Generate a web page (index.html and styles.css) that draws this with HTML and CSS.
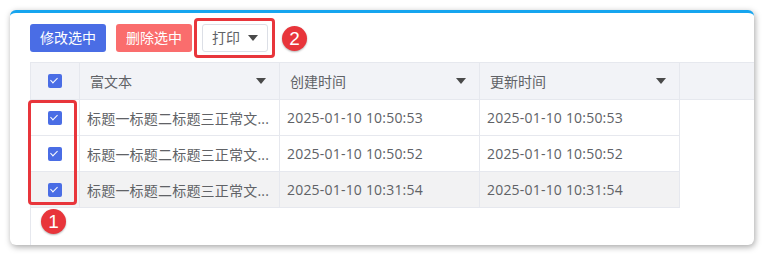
FILE: index.html
```html
<!DOCTYPE html>
<html lang="zh-CN">
<head>
    <meta charset="UTF-8">
    <title>打印</title>
    <link rel="stylesheet" href="styles.css">
</head>
<body>
    <div class="card">
        <div class="toolbar">
            <button class="btn btn-primary">修改选中</button>
            <button class="btn btn-danger">删除选中</button>
            <span class="print-wrap">
                <button class="btn btn-plain">打印 <i class="caret"></i></button>
                <span class="mark mark-print"></span>
                <span class="badge badge-2">2</span>
            </span>
        </div>
        <div class="table-wrap">
            <div class="thead">
                <div class="cell cell-check"><span class="check"></span></div>
                <div class="cell">富文本<i class="caret"></i></div>
                <div class="cell">创建时间<i class="caret"></i></div>
                <div class="cell">更新时间<i class="caret"></i></div>
                <div class="cell gutter"></div>
            </div>
            <div class="row">
                <div class="cell cell-check"><span class="check"></span></div>
                <div class="cell">标题一标题二标题三正常文...</div>
                <div class="cell">2025-01-10 10:50:53</div>
                <div class="cell">2025-01-10 10:50:53</div>
            </div>
            <div class="row">
                <div class="cell cell-check"><span class="check"></span></div>
                <div class="cell">标题一标题二标题三正常文...</div>
                <div class="cell">2025-01-10 10:50:52</div>
                <div class="cell">2025-01-10 10:50:52</div>
            </div>
            <div class="row hover">
                <div class="cell cell-check"><span class="check"></span></div>
                <div class="cell">标题一标题二标题三正常文...</div>
                <div class="cell">2025-01-10 10:31:54</div>
                <div class="cell">2025-01-10 10:31:54</div>
            </div>
            <span class="mark mark-check"></span>
            <span class="badge badge-1">1</span>
        </div>
    </div>
</body>
</html>
```

FILE: styles.css
```css
body {
    margin: 0;
    background: #fff;
    font-family: "Open Sans", "Noto Sans CJK SC", sans-serif;
    color: #606266;
}
.card {
    margin: 10px;
    height: 235px;
    box-sizing: border-box;
    background: #fff;
    border-top: 3px solid #16a5ef;
    border-radius: 6px;
    box-shadow: 1px 2px 6px rgba(0, 0, 0, 0.35);
    overflow: hidden;
    display: flex;
    flex-direction: column;
}
.toolbar {
    display: flex;
    gap: 10px;
    padding: 11px 20px 10px;
}
.btn {
    height: 28px;
    padding: 0 9px;
    border: 1px solid transparent;
    border-radius: 3px;
    font-family: inherit;
    font-size: 14px;
    line-height: 26px;
    color: #fff;
}
.btn-primary {
    background: #4a6de5;
}
.btn-danger {
    background: #fa6d6d;
}
.btn-plain {
    background: #fff;
    border-color: #dcdfe6;
    color: #606266;
    display: flex;
    align-items: center;
    gap: 8px;
}
.caret {
    display: inline-block;
    width: 0;
    height: 0;
    border-left: 5px solid transparent;
    border-right: 5px solid transparent;
    border-top: 6px solid #4a4a4a;
}
.print-wrap {
    position: relative;
}
.mark {
    position: absolute;
    border: 3px solid #e8353b;
    border-radius: 4px;
}
.mark-print {
    top: -6px;
    bottom: -6px;
    left: -8px;
    right: -7px;
}
.badge {
    position: absolute;
    width: 25px;
    height: 25px;
    border-radius: 50%;
    background: #e8353b;
    color: #fff;
    font-family: "Liberation Sans", sans-serif;
    font-size: 19px;
    line-height: 25px;
    text-align: center;
    box-shadow: 0 1px 2px rgba(0, 0, 0, 0.3);
}
.badge-2 {
    top: 2px;
    left: 80px;
}
.table-wrap {
    position: relative;
    flex: 1;
    margin-left: 20px;
    border-left: 1px solid #e6e8ee;
    font-size: 14px;
}
.thead, .row {
    display: grid;
    grid-template-columns: 49px 200px 200px 200px;
}
.thead {
    grid-template-columns: 49px 200px 200px 200px 1fr;
    background: #f2f3f7;
    border-top: 1px solid #e6e8ee;
    height: 37px;
}
.cell {
    box-sizing: border-box;
    border-right: 1px solid #e6e8ee;
    border-bottom: 1px solid #e6e8ee;
    padding: 0 13px 0 10px;
    display: flex;
    align-items: center;
    justify-content: space-between;
    white-space: nowrap;
}
.cell.gutter {
    border-right: none;
}
.row {
    width: max-content;
    height: 36px;
    letter-spacing: 0.2px;
}
.row .cell {
    padding: 0 6px 0 7px;
    justify-content: flex-start;
}
.row.hover {
    background: #f2f2f3;
}
.cell-check,
.row .cell-check {
    justify-content: center;
    padding: 0;
}
.check {
    width: 14px;
    height: 14px;
    border-radius: 2px;
    background: #4a6de5;
    position: relative;
}
.check::after {
    content: "";
    position: absolute;
    left: 4px;
    top: 2px;
    width: 3px;
    height: 6px;
    border: solid #fff;
    border-width: 0 1.5px 1.5px 0;
    transform: rotate(45deg);
}
.mark-check {
    top: 38px;
    left: -3px;
    width: 43px;
    height: 99px;
}
.badge-1 {
    top: 147px;
    left: 10px;
}
```
